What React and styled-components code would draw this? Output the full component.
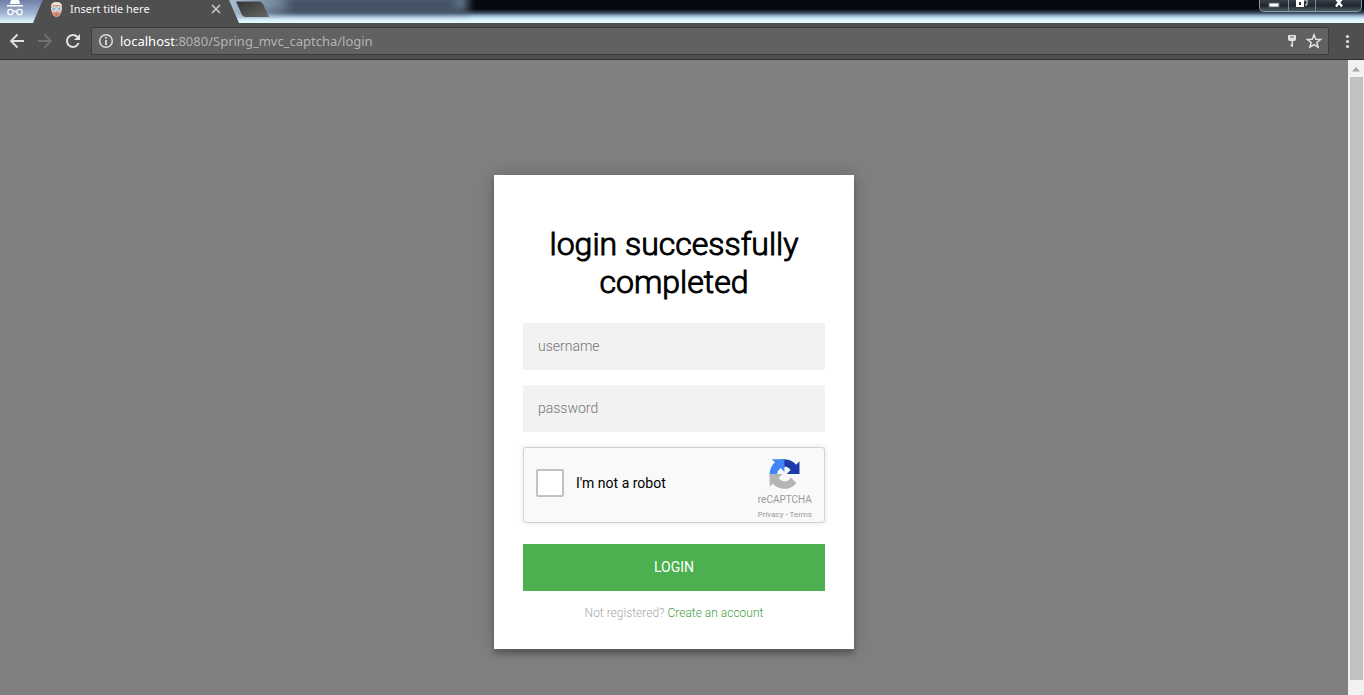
import React from "react";
import styled, { createGlobalStyle } from "styled-components";

const GlobalStyle = createGlobalStyle`
  * { box-sizing: border-box; }
  body { margin: 0; font-family: Roboto, sans-serif; }
  button, input { font-family: inherit; border: 0; padding: 0; margin: 0; background: none; border-radius: 0; }
  h1, p { margin: 0; }
  svg { display: block; }
`;

const Window = styled.div`
  display: flex;
  flex-direction: column;
  min-height: 100vh;
`;

const TitleBar = styled.header`
  position: relative;
  display: flex;
  align-items: flex-start;
  height: 23px;
  overflow: hidden;
  background: linear-gradient(to bottom, transparent 9px, #3e4f63 13px, #9fbdd8 16px, #d9f1fb 19px, #e4fbff 22px), #05080f;
`;

const Glass = styled.svg`
  position: absolute;
  left: 0;
  top: 0;
`;

const Incognito = styled.svg`
  position: relative;
  flex: none;
  margin-left: 6px;
`;

const Tab = styled.div`
  position: relative;
  display: flex;
  align-items: center;
  width: 176px;
  height: 18px;
  margin-left: 26px;
  gap: 7px;
`;

const TabTitle = styled.span`
  flex: 1;
  font: 11px/18px "Noto Sans", sans-serif;
  color: #f4f4f4;
`;

const BareButton = styled.button`
  display: flex;
  align-items: center;
  justify-content: center;
  flex: none;
`;

const WindowButtons = styled.div`
  position: relative;
  display: flex;
  height: 12px;
  margin-left: auto;
  margin-right: 2px;
  border: 1px solid #8b98a5;
  border-top: 0;
  border-radius: 0 0 5px 5px;
  background: linear-gradient(#39414a, #20262d 50%, #4b5a68);
`;

const WindowButton = styled(BareButton)`
  width: ${(p) => p.$width}px;
  align-items: flex-start;
  & + & { border-left: 1px solid #7d8995; }
`;

const Toolbar = styled.nav`
  display: flex;
  align-items: center;
  height: 37px;
  padding: 0 8px 0 9px;
  background: #4f4f4f;
  border-bottom: 1px solid #2e2e2e;
`;

const NavButtons = styled.div`
  display: flex;
  gap: 12px;
  margin-right: 10px;
`;

const AddressBar = styled.div`
  display: flex;
  align-items: center;
  flex: 1;
  height: 28px;
  padding: 0 6px;
  gap: 6px;
  background: #616161;
  border: 1px solid #3c3c3c;
  border-radius: 2px;
  margin-right: 11px;
`;

const Url = styled.span`
  flex: 1;
  font: 13px/18px "Noto Sans", sans-serif;
  color: #b4b4b4;
  b { font-weight: 400; color: #ffffff; }
`;

const Viewport = styled.div`
  display: flex;
  flex: 1;
  background: #808080;
`;

const Page = styled.main`
  flex: 1;
  display: flex;
  justify-content: center;
  align-items: flex-start;
  padding: 115px 16px 46px;
`;

const Scrollbar = styled.div`
  display: flex;
  flex-direction: column;
  align-items: center;
  width: 16px;
  background: #f1f1f1;
  padding: 7px 0 15px;
`;

const Thumb = styled.div`
  flex: 1;
  width: 13px;
  margin-top: 5px;
  background: #c1c1c1;
`;

const Card = styled.form`
  display: flex;
  flex-direction: column;
  width: 360px;
  padding: 50px 29px 28px;
  background: #ffffff;
  text-align: center;
  box-shadow: 0 0 20px rgba(0, 0, 0, 0.2), 0 5px 5px rgba(0, 0, 0, 0.24);
`;

const Heading = styled.h1`
  margin-bottom: 22px;
  font-size: 32px;
  font-weight: 300;
  line-height: 38px;
  color: #000000;
  -webkit-text-stroke: 1px #000000;
`;

const Field = styled.input`
  width: 100%;
  height: 47px;
  margin-bottom: 15px;
  padding: 0 15px 2px;
  background: #f2f2f2;
  font-size: 14px;
  font-weight: 300;
  &::placeholder { color: #757575; opacity: 1; }
`;

const Captcha = styled.div`
  display: flex;
  height: 76px;
  margin-bottom: 21px;
  padding: 0 12px;
  background: #f9f9f9;
  border: 1px solid #d3d3d3;
  border-radius: 3px;
  box-shadow: 0 0 4px 1px rgba(0, 0, 0, 0.08);
`;

const CaptchaLabel = styled.label`
  display: flex;
  align-items: center;
  gap: 12px;
  flex: 1;
  padding-bottom: 4px;
  font-size: 14px;
  color: #000000;
`;

const CheckBox = styled.input`
  appearance: none;
  width: 28px;
  height: 28px;
  background: #ffffff;
  border: 2px solid #c1c1c1;
  border-radius: 2px;
`;

const Brand = styled.div`
  display: flex;
  flex-direction: column;
  align-items: center;
  padding-top: 11px;
  color: #9b9b9b;
`;

const BrandName = styled.span`
  margin-top: 4px;
  font-size: 10px;
  line-height: 14px;
`;

const Legal = styled.div`
  font-size: 8px;
  line-height: 15px;
  a { color: inherit; text-decoration: none; }
`;

const Submit = styled.button`
  height: 47px;
  padding-bottom: 2px;
  background: #4caf50;
  color: #ffffff;
  font-size: 14px;
  text-transform: uppercase;
`;

const Message = styled.p`
  margin-top: 15px;
  font-size: 12px;
  font-weight: 300;
  line-height: 15px;
  color: #a8a8a8;
  a { color: #43a047; text-decoration: none; }
`;

function TitleGlass() {
  return (
    <Glass width="480" height="23" aria-hidden="true">
      <defs>
        <filter id="soft" x="-20%" y="-60%" width="140%" height="220%"><feGaussianBlur stdDeviation="4" /></filter>
        <linearGradient id="sky" x1="0" y1="0" x2="0" y2="1">
          <stop offset="0" stopColor="#6f7fa6" />
          <stop offset="0.6" stopColor="#a3b6d2" />
          <stop offset="1" stopColor="#e4f8ff" />
        </linearGradient>
        <linearGradient id="haze" x1="0" y1="0" x2="1" y2="0">
          <stop offset="0" stopColor="#b4cbe0" />
          <stop offset="1" stopColor="#b4cbe0" stopOpacity="0" />
        </linearGradient>
        <linearGradient id="plus" x1="0" y1="0" x2="1" y2="1">
          <stop offset="0" stopColor="#343434" />
          <stop offset="1" stopColor="#656862" />
        </linearGradient>
      </defs>
      <rect x="225" y="-10" width="243" height="23" fill="#5c7085" filter="url(#soft)" />
      <rect x="285" y="0" width="170" height="7" fill="#303e50" filter="url(#soft)" />
      <rect width="46" height="23" fill="url(#sky)" />
      <rect x="220" width="75" height="18" fill="url(#haze)" />
      <path d="M33 23L41 4L43 0H229L239 23Z" fill="#4f4f4f" />
      <path d="M236 1.500H259Q262 1.500 263 4L269 17H246Q243 17 242 15Z" fill="url(#plus)" />
    </Glass>
  );
}

function Favicon() {
  return (
    <svg width="13" height="17" viewBox="0 0 13 17" aria-hidden="true">
      <path d="M1 7Q0 1 6.500 1T12 7L11.500 11Q10 16 6.500 16T1.500 11Z" fill="#d99b80" />
      <path d="M1 6Q1 1 6.500 1T12 6L10 4H3Z" fill="#e9e4e0" />
      <circle cx="4" cy="8" r="2.300" fill="#8fb4d4" stroke="#ecf2f5" />
      <circle cx="9" cy="8" r="2.300" fill="#8fb4d4" stroke="#ecf2f5" />
      <path d="M4 12.800Q6.500 11.500 9 12.800Q8 15 6.500 15T4 12.800Z" fill="#bd7b64" />
    </svg>
  );
}

function RecaptchaLogo() {
  return (
    <svg width="31" height="31" viewBox="0 0 64 64" aria-hidden="true">
      <path d="M64 32l-.02-1.370V4.900l-7.110 7.110C51.050 4.880 42.190.330 32.270.330c-10.320 0-19.490 4.930-25.280 12.560l11.650 11.780c1.140-2.110 2.760-3.930 4.710-5.290 2.030-1.580 4.900-2.870 8.880-2.870.480 0 .850.050 1.120.160 4.930.390 9.200 3.110 11.710 7.060l-8.250 8.250L64 32" fill="#1c3aa9" />
      <path d="M31.860.350L30.490.370H4.880l7.080 7.080C4.820 13.270.290 22.130.290 32.050c0 10.320 4.930 19.490 12.560 25.280L24.630 45.680c-2.110-1.140-3.930-2.760-5.290-4.710-1.580-2.030-2.870-4.900-2.870-8.880 0-.480.050-.850.160-1.120.390-4.930 3.110-9.200 7.060-11.710l8.250 8.250L31.860.350" fill="#4285f4" />
      <path d="M.290 32.050l.020 1.370v25.730l7.110-7.110c5.820 7.130 14.680 11.680 24.600 11.680 10.320 0 19.490-4.930 25.280-12.560L45.650 39.380c-1.140 2.110-2.760 3.930-4.710 5.290-2.030 1.580-4.900 2.870-8.880 2.870-.480 0-.850-.050-1.120-.160-4.930-.390-9.200-3.110-11.710-7.060l8.250-8.250L.290 32.050" fill="#b5b5b5" />
    </svg>
  );
}

export default function App() {
  return (
    <Window>
      <GlobalStyle />
      <TitleBar>
        <TitleGlass />
        <Incognito width="18" height="18" viewBox="0 0 18 18" aria-hidden="true">
          <path d="M5 0H13L14 4H4ZM1 5H17V6.500H1Z" fill="#fff" />
          <g fill="none" stroke="#fff" strokeWidth="1.300">
            <circle cx="4.500" cy="12" r="2.700" /><circle cx="13.500" cy="12" r="2.700" /><path d="M7 12Q9 10.500 11 12" />
          </g>
        </Incognito>
        <Tab>
          <Favicon />
          <TabTitle>Insert title here</TabTitle>
          <BareButton aria-label="Close tab">
            <svg width="20" height="18"><path d="M6 5L14 13M14 5L6 13" stroke="#d0d0d0" strokeWidth="1.500" /></svg>
          </BareButton>
        </Tab>
        <WindowButtons>
          <WindowButton $width={28} aria-label="Minimize">
            <svg width="14" height="9"><rect x="2" y="3" width="10" height="4" fill="#fff" stroke="#5c6670" /></svg>
          </WindowButton>
          <WindowButton $width={27} aria-label="Restore">
            <svg width="14" height="9"><path d="M5 0H12V5H10" fill="none" stroke="#e8e8e8" /><path d="M1 0H9V7H1ZM4 2V5H6V2Z" fill="#fff" fillRule="evenodd" /></svg>
          </WindowButton>
          <WindowButton $width={46} aria-label="Close window">
            <svg width="14" height="9"><path d="M3.500 -2L10 6.500M10.500 -2L4 6.500" stroke="#fff" strokeWidth="2.300" /></svg>
          </WindowButton>
        </WindowButtons>
      </TitleBar>
      <Toolbar>
        <NavButtons>
          <BareButton aria-label="Back">
            <svg width="16" height="16"><path d="M15 8H2M8.500 1.500L2 8L8.500 14.500" fill="none" stroke="#e2e2e2" strokeWidth="1.800" /></svg>
          </BareButton>
          <BareButton aria-label="Forward">
            <svg width="16" height="16"><path d="M1 8H14M7.500 1.500L14 8L7.500 14.500" fill="none" stroke="#707070" strokeWidth="1.800" /></svg>
          </BareButton>
          <BareButton aria-label="Reload">
            <svg width="16" height="16"><path d="M13.600 10A6 6 0 1 1 12.500 4" fill="none" stroke="#e2e2e2" strokeWidth="2" /><path d="M15 1V7H9Z" fill="#e2e2e2" /></svg>
          </BareButton>
        </NavButtons>
        <AddressBar>
          <svg width="16" height="16" aria-hidden="true"><circle cx="8" cy="8" r="6.300" fill="none" stroke="#dcdcdc" strokeWidth="1.500" /><path d="M7.100 4H8.900V5.800H7.100ZM7.100 7H8.900V12H7.100Z" fill="#dcdcdc" /></svg>
          <Url><b>localhost</b>:8080/Spring_mvc_captcha/login</Url>
          <BareButton aria-label="Saved password">
            <svg width="16" height="16"><path d="M5 2H11Q12 2 12 3V6Q12 8 10 8H9V14H7.500V13H6.500V11.500H7.500V8H6Q4 8 4 6V3Q4 2 5 2ZM6 3.500V4.500H10V3.500Z" fill="#e2e2e2" fillRule="evenodd" /></svg>
          </BareButton>
          <BareButton aria-label="Bookmark this page">
            <svg width="16" height="16"><path d="M8 1.800L9.800 6.200L14.500 6.500L10.900 9.500L12.100 14.100L8 11.600L3.900 14.100L5.100 9.500L1.500 6.500L6.200 6.200Z" fill="none" stroke="#e2e2e2" strokeWidth="1.500" /></svg>
          </BareButton>
        </AddressBar>
        <BareButton aria-label="Menu">
          <svg width="16" height="16"><g fill="#dcdcdc"><circle cx="7.500" cy="3.500" r="1.600" /><circle cx="7.500" cy="8.500" r="1.600" /><circle cx="7.500" cy="13.500" r="1.600" /></g></svg>
        </BareButton>
      </Toolbar>
      <Viewport>
        <Page>
          <Card onSubmit={(e) => e.preventDefault()}>
            <Heading>login successfully completed</Heading>
            <Field type="text" placeholder="username" aria-label="username" />
            <Field type="password" placeholder="password" aria-label="password" />
            <Captcha>
              <CaptchaLabel>
                <CheckBox type="checkbox" />
                I'm not a robot
              </CaptchaLabel>
              <Brand>
                <RecaptchaLogo />
                <BrandName>reCAPTCHA</BrandName>
                <Legal><a href="#privacy">Privacy</a> - <a href="#terms">Terms</a></Legal>
              </Brand>
            </Captcha>
            <Submit type="submit">Login</Submit>
            <Message>Not registered? <a href="#register">Create an account</a></Message>
          </Card>
        </Page>
        <Scrollbar>
          <svg width="16" height="5" aria-hidden="true"><path d="M4 4.500L8 0L12 4.500Z" fill="#a3a3a3" /></svg>
          <Thumb />
        </Scrollbar>
      </Viewport>
    </Window>
  );
}
